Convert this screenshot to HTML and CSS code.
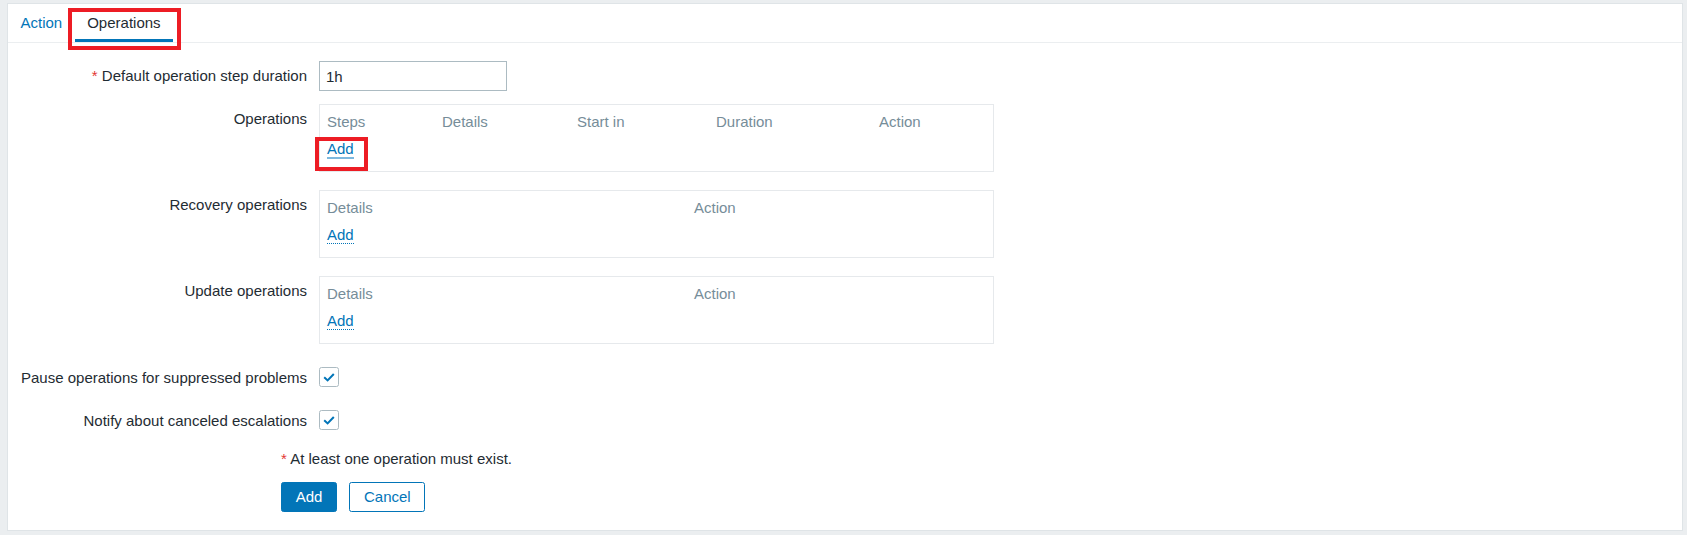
FILE: index.html
```html
<!DOCTYPE html>
<html lang="en">
<head>
<meta charset="utf-8">
<title>Action operations</title>
<link rel="stylesheet" href="styles.css">
</head>
<body>
<div class="panel">
  <nav class="tabs">
    <a class="tab tab-link">Action</a>
    <a class="tab tab-active">Operations<span class="mark mark-tab"></span></a>
  </nav>
  <form class="form">
    <div class="form-grid">
      <label class="lbl"><span class="star">*</span> Default operation step duration</label>
      <div class="field"><input class="input" type="text" value="1h"></div>

      <label class="lbl">Operations</label>
      <div class="box">
        <div class="thead cols-ops">
          <span>Steps</span><span>Details</span><span>Start in</span><span>Duration</span><span>Action</span>
        </div>
        <div class="add-row"><a class="add add-focus">Add<span class="mark mark-add"></span></a></div>
      </div>

      <label class="lbl">Recovery operations</label>
      <div class="box">
        <div class="thead cols-two">
          <span>Details</span><span>Action</span>
        </div>
        <div class="add-row"><a class="add">Add</a></div>
      </div>

      <label class="lbl">Update operations</label>
      <div class="box">
        <div class="thead cols-two">
          <span>Details</span><span>Action</span>
        </div>
        <div class="add-row"><a class="add">Add</a></div>
      </div>

      <label class="lbl lbl-cb">Pause operations for suppressed problems</label>
      <div class="cb-field">
        <span class="checkbox"><svg width="20" height="20" viewBox="0 0 20 20"><path d="M5.2 10.2 L8.6 13.4 L14.8 7" fill="none" stroke="#0275b8" stroke-width="2"/></svg></span>
      </div>

      <label class="lbl lbl-cb">Notify about canceled escalations</label>
      <div class="cb-field">
        <span class="checkbox"><svg width="20" height="20" viewBox="0 0 20 20"><path d="M5.2 10.2 L8.6 13.4 L14.8 7" fill="none" stroke="#0275b8" stroke-width="2"/></svg></span>
      </div>
    </div>
    <div class="actions">
      <p class="msg"><span class="star">*</span> At least one operation must exist.</p>
      <div class="buttons">
        <button type="button" class="btn btn-primary">Add</button>
        <button type="button" class="btn btn-alt">Cancel</button>
      </div>
    </div>
  </form>
</div>
</body>
</html>
```
FILE: styles.css
```css
* { box-sizing: border-box; }
html, body {
  margin: 0;
  background: #ebeef0;
}
body {
  padding: 3px 4px 0 7px;
  font-family: "Liberation Sans", Arial, sans-serif;
  font-size: 15px;
  color: #1f2c33;
}
.panel {
  background: #fff;
  border: 1px solid #dfe4e7;
}
.tabs {
  display: flex;
  height: 39px;
  border-bottom: 1px solid #ebeef0;
}
.tab {
  position: relative;
  display: block;
  height: 38px;
  padding: 10px 12.5px 7px;
  line-height: 18px;
  border-bottom: 3px solid transparent;
}
.tab-link { color: #0275b8; }
.tab-active {
  color: #1f2c33;
  border-bottom-color: #0275b8;
}
.mark {
  position: absolute;
  border: 4px solid #ed1c24;
  pointer-events: none;
}
.mark-tab {
  left: -7px;
  top: 4px;
  width: 113px;
  height: 42px;
}
.form {
  padding: 18px 0 18px;
}
.form-grid {
  display: grid;
  grid-template-columns: 299px 675px;
  column-gap: 12px;
  row-gap: 13px;
  align-items: start;
}
.lbl {
  text-align: right;
  line-height: 18px;
  padding-top: 6px;
  white-space: nowrap;
}
.lbl-cb {
  padding-top: 6px;
  line-height: 20px;
}
.star { color: #e33734; }
.input {
  display: block;
  width: 188px;
  height: 30px;
  margin: 0;
  padding: 0 6px;
  border: 1px solid #acbbc2;
  border-radius: 0;
  font: inherit;
  color: #1f2c33;
  background: #fff;
  outline: none;
}
.box {
  border: 1px solid #e6e9ec;
  height: 68px;
  margin-bottom: 5px;
  padding: 8px 7px 0;
}
.thead {
  display: grid;
  line-height: 18px;
  color: #768d99;
}
.cols-ops { grid-template-columns: 115px 135px 139px 163px 1fr; }
.cols-two { grid-template-columns: 367px 1fr; }
.add-row {
  margin-top: 9px;
  line-height: 18px;
}
.add {
  position: relative;
  display: inline-block;
  color: #0275b8;
  line-height: 17px;
  border-bottom: 1px dotted #0275b8;
}
.add-focus {
  border-bottom: 2px solid #7db8de;
  line-height: 16px;
}
.mark-add {
  left: -12px;
  top: -4px;
  width: 53px;
  height: 34px;
}
.cb-field {
  height: 30px;
  display: flex;
  align-items: center;
}
.checkbox {
  display: block;
  width: 20px;
  height: 20px;
  border: 1px solid #acbbc2;
  border-radius: 2.5px;
  background: #fff;
  position: relative;
}
.checkbox svg {
  position: absolute;
  left: -1px;
  top: -1px;
}
.actions {
  margin-left: 273px;
}
.msg {
  margin: 15px 0 0;
  line-height: 18px;
}
.buttons {
  display: flex;
  gap: 12px;
  margin-top: 14px;
}
.btn {
  height: 30px;
  margin: 0;
  padding: 0 13.75px;
  border: 1px solid #0275b8;
  border-radius: 2.5px;
  font: inherit;
  line-height: 28px;
  cursor: pointer;
}
.btn-primary {
  background: #0275b8;
  color: #fff;
}
.btn-alt {
  background: #fff;
  color: #0275b8;
}
```
